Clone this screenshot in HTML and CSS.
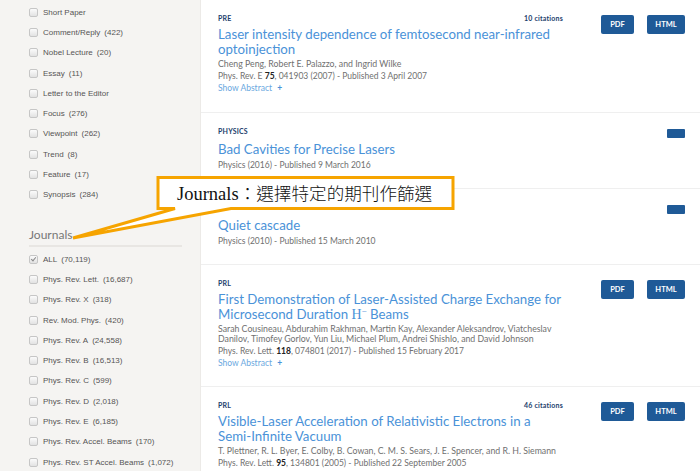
FILE: index.html
```html
<!DOCTYPE html>
<html lang="en">
<head>
    <meta charset="UTF-8">
    <title>Search results</title>
    <link rel="stylesheet" href="styles.css">
</head>
<body>
<div class="page">
    <aside class="sidebar">
        <ul class="facet">
            <li><span class="box"></span>Short Paper</li>
            <li><span class="box"></span>Comment/Reply<span class="count">(422)</span></li>
            <li><span class="box"></span>Nobel Lecture<span class="count">(20)</span></li>
            <li><span class="box"></span>Essay<span class="count">(11)</span></li>
            <li><span class="box"></span>Letter to the Editor</li>
            <li><span class="box"></span>Focus<span class="count">(276)</span></li>
            <li><span class="box"></span>Viewpoint<span class="count">(262)</span></li>
            <li><span class="box"></span>Trend<span class="count">(8)</span></li>
            <li><span class="box"></span>Feature<span class="count">(17)</span></li>
            <li><span class="box"></span>Synopsis<span class="count">(284)</span></li>
        </ul>

        <h3 class="facet-title">Journals</h3>
        <ul class="facet">
            <li><span class="box checked"></span>ALL<span class="count">(70,119)</span></li>
            <li><span class="box"></span>Phys. Rev. Lett.<span class="count">(16,687)</span></li>
            <li><span class="box"></span>Phys. Rev. X<span class="count">(318)</span></li>
            <li><span class="box"></span>Rev. Mod. Phys.<span class="count">(420)</span></li>
            <li><span class="box"></span>Phys. Rev. A<span class="count">(24,558)</span></li>
            <li><span class="box"></span>Phys. Rev. B<span class="count">(16,513)</span></li>
            <li><span class="box"></span>Phys. Rev. C<span class="count">(599)</span></li>
            <li><span class="box"></span>Phys. Rev. D<span class="count">(2,018)</span></li>
            <li><span class="box"></span>Phys. Rev. E<span class="count">(6,185)</span></li>
            <li><span class="box"></span>Phys. Rev. Accel. Beams<span class="count">(170)</span></li>
            <li><span class="box"></span>Phys. Rev. ST Accel. Beams<span class="count">(1,072)</span></li>
        </ul>
    </aside>

    <main class="results">
        <article class="result result-first">
            <div class="result-body">
                <div class="result-head"><span>PRE</span><span>10 citations</span></div>
                <h2 class="title">Laser intensity dependence of femtosecond near-infrared optoinjection</h2>
                <p class="authors">Cheng Peng, Robert E. Palazzo, and Ingrid Wilke</p>
                <p class="pub">Phys. Rev. E <b>75</b>, 041903 (2007) - Published 3 April 2007</p>
                <a class="show-abstract">Show Abstract <span class="plus">+</span></a>
            </div>
            <div class="actions">
                <a class="btn btn-pdf">PDF</a>
                <a class="btn btn-html">HTML</a>
            </div>
        </article>

        <article class="result result-short">
            <div class="result-body">
                <div class="result-head"><span>PHYSICS</span></div>
                <h2 class="title">Bad Cavities for Precise Lasers</h2>
                <p class="pub">Physics (2016) - Published 9 March 2016</p>
            </div>
            <div class="actions">
                <span class="btn-stub"></span>
            </div>
        </article>

        <article class="result result-short">
            <div class="result-body">
                <div class="result-head"><span>PHYSICS</span></div>
                <h2 class="title">Quiet cascade</h2>
                <p class="pub">Physics (2010) - Published 15 March 2010</p>
            </div>
            <div class="actions">
                <span class="btn-stub"></span>
            </div>
        </article>

        <article class="result">
            <div class="result-body">
                <div class="result-head"><span>PRL</span></div>
                <h2 class="title">First Demonstration of Laser-Assisted Charge Exchange for Microsecond Duration <span class="math">H<sup>&minus;</sup></span> Beams</h2>
                <p class="authors">Sarah Cousineau, Abdurahim Rakhman, Martin Kay, Alexander Aleksandrov, Viatcheslav Danilov, Timofey Gorlov, Yun Liu, Michael Plum, Andrei Shishlo, and David Johnson</p>
                <p class="pub">Phys. Rev. Lett. <b>118</b>, 074801 (2017) - Published 15 February 2017</p>
                <a class="show-abstract">Show Abstract <span class="plus">+</span></a>
            </div>
            <div class="actions">
                <a class="btn btn-pdf">PDF</a>
                <a class="btn btn-html">HTML</a>
            </div>
        </article>

        <article class="result">
            <div class="result-body">
                <div class="result-head"><span>PRL</span><span>46 citations</span></div>
                <h2 class="title">Visible-Laser Acceleration of Relativistic Electrons in a <span class="nowrap">Semi-Infinite</span> Vacuum</h2>
                <p class="authors">T. Plettner, R. L. Byer, E. Colby, B. Cowan, C. M. S. Sears, J. E. Spencer, and R. H. Siemann</p>
                <p class="pub">Phys. Rev. Lett. <b>95</b>, 134801 (2005) - Published 22 September 2005</p>
            </div>
            <div class="actions">
                <a class="btn btn-pdf">PDF</a>
                <a class="btn btn-html">HTML</a>
            </div>
        </article>
    </main>

    <!-- annotation callout pointing at the Journals facet -->
    <div class="callout">
        <svg class="callout-shape" width="388" height="70" viewBox="0 0 388 70">
            <path d="M88 4.5 H383 V35.5 H161 L3 65 L105 35.5 H88 Z" fill="#fff" stroke="#f6a400" stroke-width="3" stroke-linejoin="miter"/>
        </svg>
        <div class="callout-text"><span class="callout-en">Journals</span><span class="callout-zh">：選擇特定的期刊作篩選</span></div>
    </div>
</div>
</body>
</html>
```

FILE: styles.css
```css
body {
    margin: 0;
    font-family: Lato, "Open Sans", sans-serif;
    background: #fff;
}
.page {
    position: relative;
    display: flex;
    width: 700px;
    height: 471px;
    overflow: hidden;
}

/* sidebar facets */
.sidebar {
    flex: none;
    width: 201px;
    box-sizing: border-box;
    padding: 2px 18px 0 29px;
    background: #f5f4f2;
    border-right: 1px solid #eceae7;
}
.facet {
    list-style: none;
    margin: 0;
    padding: 0;
}
.facet li {
    display: flex;
    align-items: center;
    height: 20.3px;
    font-family: "Liberation Sans", Arial, sans-serif;
    font-size: 8px;
    color: #555;
    white-space: nowrap;
}
.box {
    flex: none;
    display: flex;
    align-items: center;
    justify-content: center;
    width: 7px;
    height: 7px;
    margin-right: 5px;
    border: 1px solid #c6c6c6;
    border-radius: 2px;
    background: linear-gradient(#fbfbfb, #e2e2e2);
}
.box.checked::after {
    content: "";
    width: 2px;
    height: 4px;
    margin-top: -1px;
    border: solid #8a8a8a;
    border-width: 0 1px 1px 0;
    transform: rotate(40deg);
}
.count {
    margin-left: 4px;
}
.facet-title {
    margin: 23px 0 2px;
    padding-bottom: 3px;
    border-bottom: 2px solid #e8e6e3;
    font-size: 12px;
    line-height: 14px;
    font-weight: 400;
    color: #777;
}

/* result list */
.results {
    flex: 1;
}
.result {
    display: flex;
    padding: 13px 15px 17px 17px;
    border-bottom: 1px solid #efefef;
}
.result-first {
    padding-bottom: 18px;
}
.result-body {
    width: 350px;
}
.result-head {
    display: flex;
    justify-content: space-between;
    height: 10px;
    padding-right: 5px;
    line-height: 10px;
    font-size: 7px;
    font-weight: 700;
    letter-spacing: 0.2px;
    color: #1c3e6c;
}
.title {
    margin: 4px 0 0;
    font-size: 13.25px;
    line-height: 15px;
    font-weight: 400;
    color: #4a92d8;
}
.nowrap {
    white-space: nowrap;
}
.math {
    font-family: "Liberation Serif", serif;
    font-size: 14px;
}
.math sup {
    font-size: 9px;
    line-height: 0;
    vertical-align: 5px;
}
.authors {
    margin: 2px 0 0;
    font-size: 8.75px;
    line-height: 10px;
    color: #707070;
}
.pub {
    margin: 1px 0 0;
    font-size: 8.5px;
    line-height: 12px;
    color: #707070;
}
.pub b {
    color: #222;
}
.show-abstract {
    display: block;
    font-size: 8.5px;
    line-height: 12px;
    color: #6aa8e0;
}
.plus {
    margin-left: 3px;
    font-weight: 700;
    color: #4a92d8;
}
.result-short .title {
    margin-top: 6px;
}
.result-short .pub {
    margin-top: 2px;
}
.actions {
    display: flex;
    align-items: flex-start;
    gap: 13px;
    margin-left: auto;
    padding-top: 2px;
}
.btn {
    display: block;
    height: 19px;
    line-height: 19px;
    border-radius: 2px;
    background: #1f5a97;
    color: #fff;
    font-size: 7.5px;
    font-weight: 700;
    text-align: center;
}
.btn-pdf { width: 33px; }
.btn-html { width: 38px; }
.btn-stub {
    display: block;
    width: 18px;
    height: 9px;
    margin-top: 1px;
    border-radius: 1px;
    background: #1f5a97;
}

/* annotation */
.callout {
    position: absolute;
    left: 70px;
    top: 173px;
    width: 388px;
    height: 70px;
}
.callout-shape {
    display: block;
}
.callout-text {
    position: absolute;
    left: 107px;
    top: 7px;
    height: 26px;
    line-height: 26px;
    color: #111;
    white-space: nowrap;
}
.callout-en {
    font-family: "Liberation Serif", serif;
    font-size: 18.5px;
}
.callout-zh {
    font-family: "Noto Sans CJK TC", sans-serif;
    font-size: 17.6px;
    font-weight: 300;
}
```
